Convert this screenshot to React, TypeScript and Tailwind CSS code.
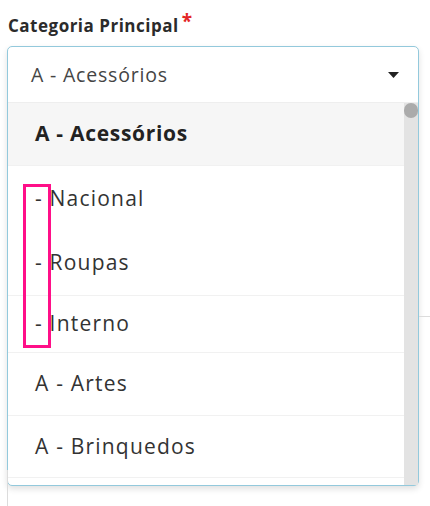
import React from "react"

const items = [
  { label: "A - Acessórios", h: "h-[63px]", active: true, line: true },
  { label: "- Nacional", h: "h-[65px]", line: false },
  { label: "- Roupas", h: "h-[65px]", line: true },
  { label: "- Interno", h: "h-[57px]", line: true },
  { label: "A - Artes", h: "h-[63px]", line: true },
  { label: "A - Brinquedos", h: "h-[62px]", line: true },
]

export default function App() {
  return (
    <div
      className="relative w-[430px] h-[506px] overflow-hidden bg-white text-[#333]"
      style={{ fontFamily: "'Open Sans', 'Noto Sans', sans-serif" }}
    >
      {/* stuff behind the open dropdown */}
      <div className="absolute left-[7px] top-[470px] h-[40px] w-px bg-[#dcdcdc]" />
      <div className="absolute left-[419px] top-[316px] h-px w-[20px] bg-[#dcdcdc]" />

      <div className="pt-[13px] pl-[8px]">
        <div className="flex items-start">
          <span className="text-[17px] font-bold leading-[26px] tracking-[0.5px] text-[#2b2b2b]">
            Categoria Principal
          </span>
          <span className="ml-[3px] mt-[-1px] text-[19px] font-bold leading-[19px] text-[#e32626]">*</span>
        </div>
      </div>

      <div className="ml-[7px] mt-[7px] w-[412px] rounded-[5px] border border-[#93c9dc] bg-white shadow-[0_3px_6px_rgba(0,0,0,0.12)]">
        <div className="flex h-[55px] items-center justify-between pl-[23px] pr-[19px]">
          <span className="text-[19.5px] tracking-[0.8px] text-[#444]">A - Acessórios</span>
          <svg width="11" height="6" viewBox="0 0 11 6">
            <path d="M0 0h11L5.5 6z" fill="#222" />
          </svg>
        </div>

        <div className="flex border-t border-[#eeeeee]">
          <div className="flex-1">
            {items.map((it) => (
              <div
                key={it.label}
                className={`flex items-center pl-[27px] text-[21px] ${it.h} ${it.line ? "border-b border-[#f1f1f1]" : ""} ${
                  it.active ? "bg-[#f6f6f6] font-bold tracking-[0.7px] text-[#222]" : "tracking-[1.2px] text-[#333]"
                }`}
              >
                {it.label}
              </div>
            ))}
            <div className="h-[7px]" />
          </div>
          <div className="w-[14px] bg-[#e3e3e3]">
            <div className="h-[15px] w-[14px] rounded-full bg-[#ababab]" />
          </div>
        </div>
      </div>

      {/* annotation box */}
      <div className="absolute left-[23px] top-[184px] h-[164px] w-[28px] border-[3px] border-[#ff0f88]" />
    </div>
  )
}
